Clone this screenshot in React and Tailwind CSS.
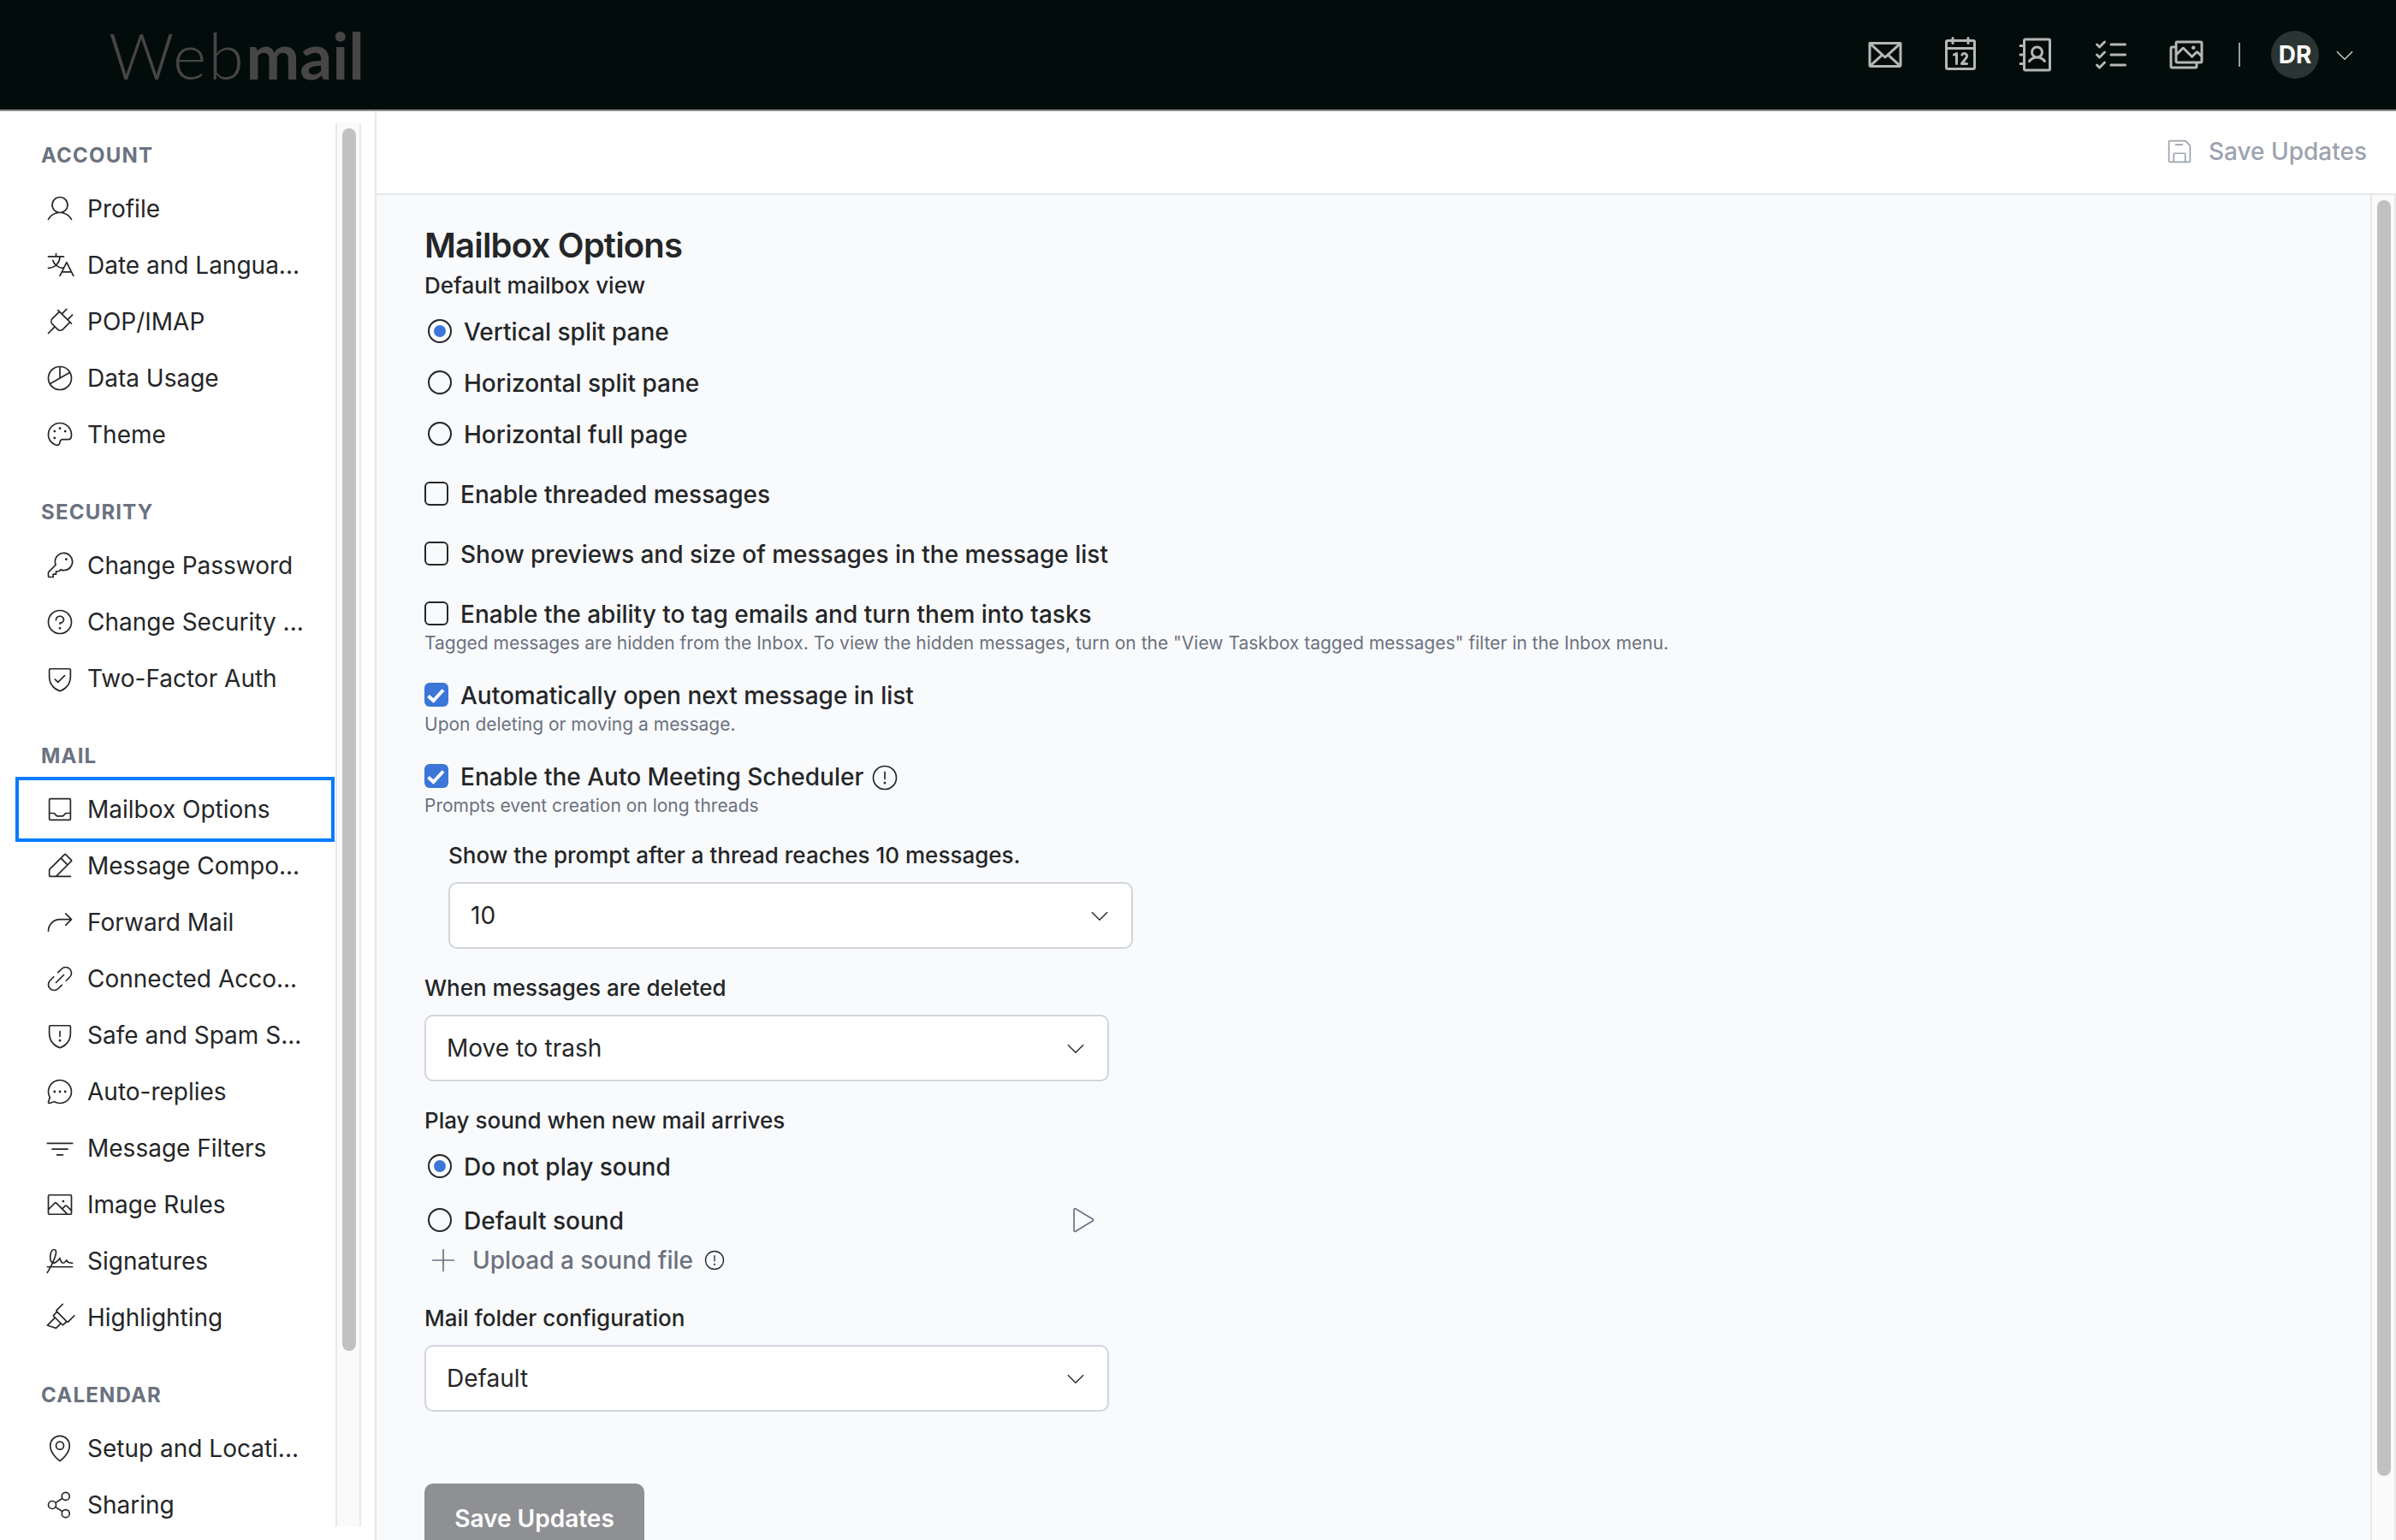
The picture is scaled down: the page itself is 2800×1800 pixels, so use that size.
import React, { useState } from "react";
import {
  PiAddressBook,
  PiArrowBendUpRightLight,
  PiCalendar,
  PiCaretDownLight,
  PiChartPieLight,
  PiChatCircleDotsLight,
  PiEnvelope,
  PiFloppyDiskLight,
  PiFunnelSimpleLight,
  PiHighlighterLight,
  PiImageLight,
  PiImages,
  PiKeyLight,
  PiLinkSimpleLight,
  PiListChecks,
  PiMapPinLight,
  PiPaletteLight,
  PiPencilSimpleLineLight,
  PiPlayLight,
  PiPlugLight,
  PiPlusLight,
  PiQuestionLight,
  PiShareNetworkLight,
  PiShieldCheckLight,
  PiShieldWarningLight,
  PiSignatureLight,
  PiTranslateLight,
  PiTrayLight,
  PiUserLight,
  PiWarningCircleLight,
} from "react-icons/pi";

const NAV_SECTIONS = [
  {
    title: "ACCOUNT",
    items: [
      { label: "Profile", icon: PiUserLight },
      { label: "Date and Langua...", icon: PiTranslateLight },
      { label: "POP/IMAP", icon: PiPlugLight },
      { label: "Data Usage", icon: PiChartPieLight },
      { label: "Theme", icon: PiPaletteLight },
    ],
  },
  {
    title: "SECURITY",
    items: [
      { label: "Change Password", icon: PiKeyLight },
      { label: "Change Security ...", icon: PiQuestionLight },
      { label: "Two-Factor Auth", icon: PiShieldCheckLight },
    ],
  },
  {
    title: "MAIL",
    items: [
      { label: "Mailbox Options", icon: PiTrayLight },
      { label: "Message Compo...", icon: PiPencilSimpleLineLight },
      { label: "Forward Mail", icon: PiArrowBendUpRightLight },
      { label: "Connected Acco...", icon: PiLinkSimpleLight },
      { label: "Safe and Spam S...", icon: PiShieldWarningLight },
      { label: "Auto-replies", icon: PiChatCircleDotsLight },
      { label: "Message Filters", icon: PiFunnelSimpleLight },
      { label: "Image Rules", icon: PiImageLight },
      { label: "Signatures", icon: PiSignatureLight },
      { label: "Highlighting", icon: PiHighlighterLight },
    ],
  },
  {
    title: "CALENDAR",
    items: [
      { label: "Setup and Locati...", icon: PiMapPinLight },
      { label: "Sharing", icon: PiShareNetworkLight },
    ],
  },
];

const APPS = [PiEnvelope, PiCalendar, PiAddressBook, PiListChecks, PiImages];

const Header = () => (
  <header className="flex h-[130px] shrink-0 items-center border-b-2 border-[#8f9190] bg-[#020d0b] pr-[46px] pl-[127px]">
    <div className="font-['Lato',sans-serif] text-[75px] leading-[90px] text-[#474546]">
      <span className="font-light tracking-[2.5px]">Web</span>
      <span className="font-bold">mail</span>
    </div>
    <nav className="ml-auto flex items-center gap-[40px] text-[#b3b8b6]">
      {APPS.map((Icon, i) => (
        <Icon key={i} className="size-[48px]" />
      ))}
    </nav>
    <div className="ml-[37px] h-[28px] w-[2px] bg-[#9a9c9b]" />
    <div className="ml-[36px] flex size-[56px] items-center justify-center rounded-full bg-[#2a3432] text-[28px] font-bold text-white">
      DR
    </div>
    <PiCaretDownLight className="ml-[16px] size-[28px] text-[#d0d3d2]" />
  </header>
);

const Sidebar = ({ active, onSelect }) => (
  <aside className="flex w-[440px] shrink-0 border-r-2 border-[#e5e7eb] bg-white pt-[14px] pb-[16px]">
    <nav className="flex w-[392px] flex-col overflow-hidden">
      {NAV_SECTIONS.map((section, i) => (
        <div key={section.title} className={i === 0 ? "mt-[18px]" : "mt-[38px]"}>
          <h3 className="pl-[48px] text-[24px] leading-[40px] font-bold tracking-[1.2px] text-[#6b7280]">
            {section.title}
          </h3>
          <ul className="pt-[9px]">
            {section.items.map(({ label, icon: Icon }) => (
              <li key={label} className="px-[23px]">
                <button
                  onClick={() => onSelect(label)}
                  className={`flex h-[66px] w-[363px] items-center gap-[14px] pl-[29px] text-[28px] whitespace-nowrap text-[#242628] ${
                    active === label ? "outline-4 outline-offset-1 outline-[#007bff]" : ""
                  }`}
                >
                  <Icon className="size-[36px] shrink-0" />
                  {label}
                </button>
              </li>
            ))}
          </ul>
        </div>
      ))}
    </nav>
    <div className="w-[30px] shrink-0 border-x-2 border-[#e8e8e8] bg-[#fafafa] pt-[6px] pl-[6px]">
      <div className="h-[1429px] w-[16px] rounded-full bg-[#c1c1c1]" />
    </div>
  </aside>
);

const Radio = ({ label, checked, className = "" }) => (
  <label className={`flex shrink-0 items-center pl-[4px] ${className}`}>
    <span
      className={`flex size-[28px] shrink-0 items-center justify-center rounded-full border-2 border-[#242628] ${
        checked ? "bg-white" : ""
      }`}
    >
      {checked && <span className="size-[14px] rounded-full bg-[#3b76d8]" />}
    </span>
    <span className="ml-[14px] pt-[2px] text-[28px] leading-[38px] font-medium">{label}</span>
  </label>
);

const Checkbox = ({ label, checked, className = "", children }) => (
  <label className={`flex shrink-0 items-center ${className}`}>
    {checked ? (
      <span className="flex size-[28px] shrink-0 items-center justify-center rounded-[6px] bg-[#3b76d8]">
        <svg viewBox="0 0 28 28" className="size-[28px]" fill="none" stroke="white" strokeWidth="4">
          <path d="M4.5 15.5 L10.5 21 L22 8.5" />
        </svg>
      </span>
    ) : (
      <span className="size-[28px] shrink-0 rounded-[6px] border-2 border-[#242628]" />
    )}
    <span className="ml-[14px] pt-[2px] text-[28px] leading-[38px] font-medium">{label}</span>
    {children}
  </label>
);

const Helper = ({ children }) => (
  <p className="shrink-0 text-[21px] leading-[30px] text-[#6b7280]">{children}</p>
);

const FieldLabel = ({ className = "", children }) => (
  <p className={`shrink-0 text-[26px] leading-[40px] font-medium ${className}`}>{children}</p>
);

const Select = ({ value, className = "" }) => (
  <div
    className={`flex h-[78px] w-[800px] shrink-0 items-center justify-between rounded-[10px] border-2 border-[#d1d5db] bg-white pr-[23px] pl-[24px] text-[28px] ${className}`}
  >
    {value}
    <PiCaretDownLight className="size-[28px]" />
  </div>
);

const MailboxOptions = () => (
  <div className="flex flex-1 flex-col pt-[35px] pl-[56px]">
    <h1 className="shrink-0 text-[40px] leading-[48px] font-semibold tracking-[-0.8px]">Mailbox Options</h1>

    {/* Default view */}
    <FieldLabel className="mt-[3px]">Default mailbox view</FieldLabel>
    <div className="mt-[3px] shrink-0">
      <Radio className="h-[60px]" label="Vertical split pane" checked />
      <Radio className="h-[60px]" label="Horizontal split pane" />
      <Radio className="h-[60px]" label="Horizontal full page" />
    </div>

    {/* Message list behaviour */}
    <Checkbox className="mt-[5px] h-[70px]" label="Enable threaded messages" />
    <Checkbox className="h-[70px]" label="Show previews and size of messages in the message list" />
    <Checkbox className="mt-[15px] h-[40px]" label="Enable the ability to tag emails and turn them into tasks" />
    <Helper>
      Tagged messages are hidden from the Inbox. To view the hidden messages, turn on the "View Taskbox tagged
      messages" filter in the Inbox menu.
    </Helper>
    <Checkbox className="mt-[25px] h-[40px]" label="Automatically open next message in list" checked />
    <Helper>Upon deleting or moving a message.</Helper>
    <Checkbox className="mt-[25px] h-[40px]" label="Enable the Auto Meeting Scheduler" checked>
      <PiWarningCircleLight className="mt-[3px] ml-[7px] size-[36px]" />
    </Checkbox>
    <Helper>Prompts event creation on long threads</Helper>
    <div className="mt-[23px] shrink-0 pl-[28px]">
      <FieldLabel>Show the prompt after a thread reaches 10 messages.</FieldLabel>
      <Select className="mt-[11px]" value="10" />
    </div>

    <FieldLabel className="mt-[26px]">When messages are deleted</FieldLabel>
    <Select className="mt-[11px]" value="Move to trash" />

    {/* Sounds */}
    <FieldLabel className="mt-[26px]">Play sound when new mail arrives</FieldLabel>
    <Radio className="mt-[13px] h-[40px]" label="Do not play sound" checked />
    <div className="mt-[23px] flex h-[40px] w-[800px] shrink-0 items-center justify-between pr-[15px]">
      <Radio label="Default sound" />
      <PiPlayLight className="size-[36px] text-[#6b7280]" />
    </div>
    <div className="mt-[7px] flex h-[40px] shrink-0 items-center pl-[4px] text-[28px] font-medium text-[#6b7280]">
      <PiPlusLight className="size-[36px]" />
      <span className="ml-[16px]">Upload a sound file</span>
      <PiWarningCircleLight className="ml-[11px] size-[28px] text-[#242628]" />
    </div>

    <FieldLabel className="mt-[28px]">Mail folder configuration</FieldLabel>
    <Select className="mt-[11px]" value="Default" />

    <button className="mt-[84px] h-[82px] w-[257px] shrink-0 rounded-[10px] bg-[#8f9093] text-[28px] font-semibold text-white">
      Save Updates
    </button>
  </div>
);

export default function App() {
  const [active, setActive] = useState("Mailbox Options");

  return (
    <div className="flex h-[1800px] w-[2800px] flex-col overflow-hidden bg-white font-['Inter',sans-serif] text-[#242628]">
      <Header />
      <div className="flex min-h-0 flex-1">
        <Sidebar active={active} onSelect={setActive} />
        <main className="flex min-w-0 flex-1 flex-col">
          <div className="flex h-[98px] shrink-0 items-center justify-end border-b-2 border-[#e5e7eb] pr-[34px] pb-[2px] text-[28px] font-medium text-[#9ca3af]">
            <PiFloppyDiskLight className="size-[36px]" />
            <span className="ml-[16px]">Save Updates</span>
          </div>
          <div className="flex min-h-0 flex-1 overflow-hidden bg-[#f9fafc]">
            <MailboxOptions />
            <div className="w-[30px] shrink-0 border-x-2 border-[#e8e8e8] bg-[#fafafa] pt-[6px] pl-[6px]">
              <div className="h-[1491px] w-[16px] rounded-full bg-[#c1c1c1]" />
            </div>
          </div>
        </main>
      </div>
    </div>
  );
}
